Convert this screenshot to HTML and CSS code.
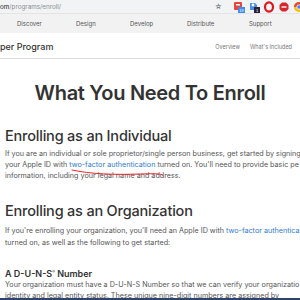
FILE: index.html
```html
<!DOCTYPE html>
<html lang="en">
<head>
    <meta charset="UTF-8">
    <meta name="viewport" content="width=device-width, initial-scale=1.0">
    <title>What You Need To Enroll</title>
    <link rel="stylesheet" href="styles.css">
</head>
<body>
    <div class="toolbar">
        <span class="url"><b>om</b>/programs/enroll/</span>
        <div class="extensions">
            <span class="star">&#9734;</span>
            <svg class="ext" width="12" height="12" viewBox="0 0 12 12">
                <rect x="1" y="1" width="8" height="8" rx="1" fill="#e8453c"/>
                <rect x="3" y="3" width="4" height="1.5" fill="#fff"/>
                <rect x="5" y="6" width="7" height="6" fill="#3d8ee8"/>
                <text x="8.5" y="10.8" font-size="4" fill="#fff" text-anchor="middle" font-family="Liberation Sans">19</text>
            </svg>
            <svg class="ext" width="12" height="12" viewBox="0 0 12 12">
                <path d="M2 2h5l2 2v5H2z" fill="#4a90e2"/>
                <circle cx="5" cy="4" r="1.4" fill="#fff"/>
                <rect x="6" y="6" width="6" height="6" fill="#2b1f3d"/>
                <text x="9" y="10.8" font-size="4" fill="#fff" text-anchor="middle" font-family="Liberation Sans">1</text>
            </svg>
            <svg class="ext" width="12" height="12" viewBox="0 0 12 12">
                <ellipse cx="6" cy="6" rx="4" ry="4.6" fill="none" stroke="#e0161f" stroke-width="2.2"/>
            </svg>
            <svg class="ext" width="12" height="12" viewBox="0 0 12 12">
                <polygon points="4,1.5 8,1.5 10.5,4 10.5,8 8,10.5 4,10.5 1.5,8 1.5,4" fill="#d6262c"/>
                <rect x="3.5" y="5.3" width="5" height="1.4" fill="#fff"/>
            </svg>
            <svg class="ext" width="12" height="12" viewBox="0 0 12 12">
                <circle cx="6" cy="6" r="5" fill="#fbbc05"/>
                <path d="M6 6L1 6A5 5 0 0 1 8.5 1.7z" fill="#ea4335"/>
                <circle cx="6" cy="6" r="2.2" fill="#4285f4" stroke="#fff" stroke-width="0.8"/>
            </svg>
        </div>
    </div>

    <nav class="globalnav">
        <a>Discover</a>
        <a>Design</a>
        <a>Develop</a>
        <a>Distribute</a>
        <a>Support</a>
    </nav>

    <div class="subnav">
        <span class="title">per Program</span>
        <div class="sublinks">
            <a>Overview</a>
            <a>What's Included</a>
        </div>
    </div>

    <main class="content">
        <h1>What You Need To Enroll</h1>

        <h2>Enrolling as an Individual</h2>
        <p class="annotated">If you are an individual or sole proprietor/single person business, get started by signing<br>
        your Apple ID with <a>two-factor authentication</a> turned on. You'll need to provide basic pe<br>
        information, including your legal name and address.
            <svg class="scribble" width="110" height="12" viewBox="0 0 110 12">
                <path d="M2 2 C 20 6, 45 7, 70 6 S 92 7, 93 8" fill="none" stroke="#e8252a" stroke-width="1" stroke-linecap="round"/>
            </svg>
        </p>

        <h2 class="org">Enrolling as an Organization</h2>
        <p class="org-text">If you're enrolling your organization, you'll need an Apple ID with <a>two-factor authentica</a><br>
        turned on, as well as the following to get started:</p>

        <h3>A D-U-N-S<sup>&reg;</sup> Number</h3>
        <p>Your organization must have a D-U-N-S Number so that we can verify your organizatio<br>
        identity and legal entity status. These unique nine-digit numbers are assigned by</p>
    </main>

    <div class="taskbar"></div>
</body>
</html>
```

FILE: styles.css
```css
html, body {
    margin: 0;
    padding: 0;
}

body {
    width: 300px;
    height: 300px;
    overflow: hidden;
    position: relative;
    font-family: 'Inter', 'Liberation Sans', sans-serif;
    background: #fff;
    color: #333;
}

.toolbar {
    height: 13px;
    background: #f1f3f4;
    display: flex;
    align-items: center;
    justify-content: space-between;
    border-bottom: 1px solid #e4e4e4;
}

.url {
    font-size: 6.3px;
    color: #8a8d91;
}

.url b {
    font-weight: normal;
    color: #222;
}

.extensions {
    display: flex;
    align-items: center;
    gap: 2px;
    margin-right: -5px;
}

.star {
    font-size: 7px;
    color: #666;
    margin-right: 8px;
}

.ext {
    display: block;
    margin-left: 1px;
}

.globalnav {
    height: 19px;
    background: #f2f2f2;
    display: flex;
    align-items: center;
    padding-left: 17px;
    font-size: 6px;
    color: #555;
}

.globalnav a:nth-child(1) { width: 59px; }
.globalnav a:nth-child(2) { width: 54px; }
.globalnav a:nth-child(3) { width: 57px; }
.globalnav a:nth-child(4) { width: 62px; }

.subnav {
    height: 24px;
    display: flex;
    align-items: center;
    justify-content: space-between;
    border-bottom: 1px solid #dcdcdc;
    padding-top: 1px;
}

.subnav .title {
    font-size: 9px;
    font-weight: 500;
    color: #333;
}

.sublinks {
    display: flex;
    gap: 10px;
    font-size: 5.5px;
    color: #777;
    padding-right: 8px;
    padding-top: 2px;
}

.content {
    padding-left: 5px;
}

h1 {
    font-size: 20px;
    font-weight: 600;
    text-align: center;
    color: #333;
    margin: 22px 0 0 -5px;
    width: 300px;
    line-height: 24px;
    letter-spacing: -0.3px;
}

h2 {
    font-size: 14.5px;
    font-weight: 500;
    color: #333;
    margin: 22px 0 0;
    line-height: 18px;
    letter-spacing: -0.2px;
}

h2.org {
    margin-top: 21px;
}

p {
    font-size: 7.2px;
    line-height: 11px;
    color: #555;
    white-space: nowrap;
    margin: 3px 0 0;
}

p.org-text {
    margin-top: 5px;
    line-height: 12px;
}

p a {
    color: #2f7bd0;
}

.annotated {
    position: relative;
}

.scribble {
    position: absolute;
    left: 65px;
    top: 20px;
}

h3 {
    font-size: 9px;
    font-weight: 600;
    color: #333;
    margin: 17px 0 0;
    line-height: 11px;
}

h3 sup {
    font-size: 4px;
    font-weight: normal;
}

h3 + p {
    margin-top: 0;
}

.taskbar {
    position: absolute;
    left: 0;
    right: 0;
    bottom: 0;
    height: 2px;
    background: #2f4468;
}
```
